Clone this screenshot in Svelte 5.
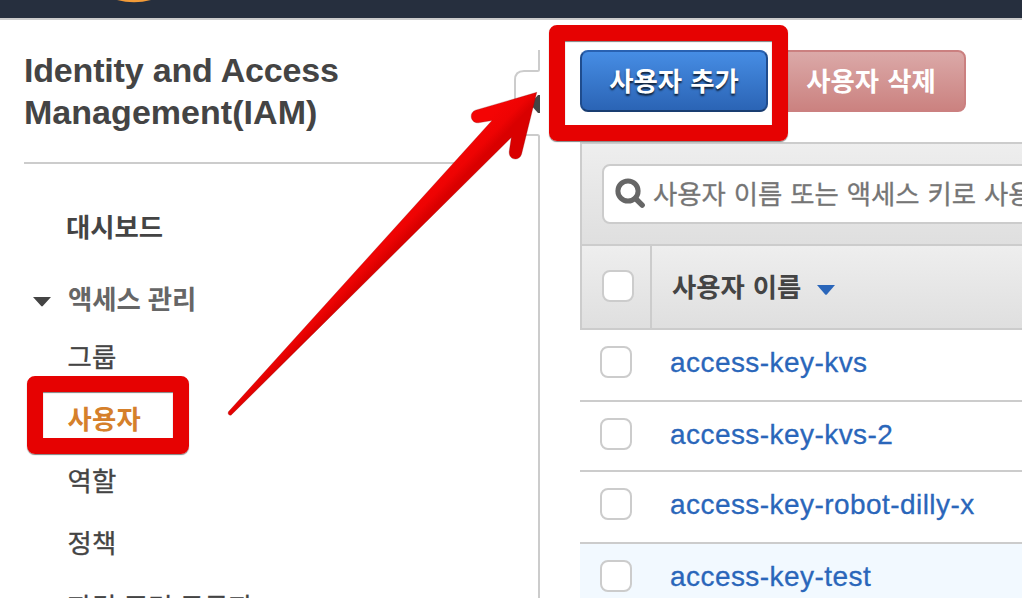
<script>
  const navItems = ['그룹', '사용자', '역할', '정책', '자격 증명 공급자'];
  const current = '사용자';
  const users = [
    { name: 'access-key-kvs', height: 72 },
    { name: 'access-key-kvs-2', height: 70 },
    { name: 'access-key-robot-dilly-x', height: 72 },
    { name: 'access-key-test', height: 72, hover: true }
  ];
</script>

<div class="page">
  <header class="topbar">
    <svg class="smile" width="40" height="4" viewBox="0 0 40 4">
      <path d="M3 0 Q20 4.4 37 0Z" fill="#f29b38" />
    </svg>
  </header>

  <div class="body">
    <aside>
      <h1>Identity and Access<br /><span>Management(IAM)</span></h1>
      <hr />
      <nav>
        <a class="dash" href="#dashboard">대시보드</a>
        <div class="group">
          <svg width="20" height="12" viewBox="0 0 20 12">
            <path d="M1 1H19L10.8 10Q10 10.9 9.2 10Z" fill="#444" />
          </svg>
          <span>액세스 관리</span>
        </div>
        {#each navItems as item}
          <a class="item" class:active={item === current} href="#{item}">{item}</a>
        {/each}
      </nav>
    </aside>

    <div class="divider">
      <svg width="28" height="548" viewBox="0 0 28 548" fill="none">
        <path d="M25 0V19.5Q25 21 23.5 21H10Q1 21 1 30V76Q1 85 10 85H23.5Q25 85 25 86.5V548" stroke="#ccc" stroke-width="2" />
        <path d="M26 45V63H24L16 54L24 45Z" fill="#444" />
      </svg>
    </div>

    <main>
      <div class="actions">
        <button class="add">사용자 추가</button>
        <button class="remove">사용자 삭제</button>
      </div>
      <section class="panel">
        <div class="filter">
          <div class="search">
            <svg width="32" height="32" viewBox="0 0 32 32" fill="none" stroke="#666">
              <circle cx="13" cy="13" r="10.1" stroke-width="5" />
              <path d="M20.5 20.5L27.2 27.2" stroke-width="5.4" stroke-linecap="round" />
            </svg>
            <span>사용자 이름 또는 액세스 키로 사용자 찾기</span>
          </div>
        </div>
        <div class="thead">
          <div class="pick"><i class="check"></i></div>
          <div class="col">
            <span>사용자 이름</span>
            <svg width="20" height="12" viewBox="0 0 20 12">
              <path d="M1 1H19L10.8 10.4Q10 11.3 9.2 10.4Z" fill="#2a66ba" />
            </svg>
          </div>
        </div>
      </section>
      {#each users as user}
        <div class="row" class:hover={user.hover} style:height="{user.height}px">
          <i class="check"></i>
          <a href="#{user.name}">{user.name}</a>
        </div>
      {/each}
    </main>
  </div>

  <div class="mark mark-add"></div>
  <div class="mark mark-nav"></div>
  <svg class="arrow" width="1022" height="598" viewBox="0 0 1022 598">
    <defs>
      <linearGradient id="shaft" gradientUnits="userSpaceOnUse" x1="490" y1="116" x2="514" y2="139">
        <stop offset="0" stop-color="#f40404" />
        <stop offset="0.42" stop-color="#ee0303" />
        <stop offset="0.7" stop-color="#d90000" />
        <stop offset="1" stop-color="#d90000" />
      </linearGradient>
    </defs>
    <path
      d="M536.8 92.3L475.5 110.2C468.5 112.5 470.5 123.5 478.5 122.8L492 120.5L228.4 411.8C227.5 414 229 415.6 231 415.2L511.3 137.5L509.2 151.5C508.5 160.5 519.5 161.5 521.6 154Z"
      fill="url(#shaft)"
      stroke="#801010"
      stroke-opacity="0.45"
      stroke-width="0.6"
    />
  </svg>
</div>

<style>
  :global(body) {
    margin: 0;
  }
  .page {
    position: relative;
    width: 1022px;
    height: 598px;
    overflow: hidden;
    background: #fff;
    color: #444;
    font-family: 'Liberation Sans', 'Noto Sans CJK KR', sans-serif;
    font-size: 26.4px;
  }
  .page * {
    box-sizing: border-box;
  }
  a {
    color: inherit;
    text-decoration: none;
  }
  .topbar {
    height: 20px;
    background: #262f3e;
    border-bottom: 2px solid #ccc;
  }
  .smile {
    display: block;
    margin-left: 114px;
  }
  .body {
    display: flex;
    height: 578px;
  }
  aside {
    width: 514px;
    flex: none;
    padding: 29px 0 0 24px;
  }
  h1 {
    margin: 0;
    font-size: 34px;
    line-height: 42px;
    letter-spacing: -0.18px;
    height: 113px;
  }
  h1 span {
    letter-spacing: 0.04px;
  }
  hr {
    margin: 0;
    width: 450px;
    border: 0;
    border-top: 2px solid #ccc;
  }
  nav {
    display: flex;
    flex-direction: column;
    padding-top: 26px;
    word-spacing: 1px;
  }
  nav,
  button,
  .search,
  .col {
    font-family: 'Noto Sans CJK KR', sans-serif;
  }
  .dash {
    height: 72px;
    line-height: 72px;
    padding-left: 42px;
    font-weight: 700;
  }
  .group {
    display: flex;
    align-items: center;
    height: 72px;
    padding-left: 8px;
    gap: 16px;
    color: #666;
    font-weight: 700;
  }
  .group span {
    margin-top: -2px;
  }
  .group svg {
    margin-top: 8px;
  }
  .item {
    height: 62px;
    line-height: 58px;
    padding-left: 43.6px;
    flex: none;
    letter-spacing: 0.2px;
    -webkit-text-stroke: 0.35px currentColor;
  }
  .group + .item {
    margin-top: -7px;
  }
  .item:last-child {
    line-height: 61px;
  }
  .item.active {
    color: #d5802b;
    font-weight: 700;
    -webkit-text-stroke: 0;
  }
  .divider {
    width: 28px;
    flex: none;
    padding-top: 30px;
  }
  .divider svg {
    display: block;
  }
  main {
    width: 480px;
    flex: none;
    margin-left: 38px;
    padding-top: 30px;
  }
  .actions {
    display: flex;
    gap: 8px;
    height: 92px;
  }
  button {
    height: 62px;
    width: 188px;
    padding: 0 0 4px;
    border-radius: 8px;
    font-size: 26.4px;
    font-weight: 700;
    word-spacing: 2px;
    color: #fff;
  }
  .add {
    border: 2px solid;
    border-color: #2861b1 #1f4c8d #193d71;
    background: linear-gradient(#468de4, #2b64b5);
    text-shadow: 0 2px 2px rgba(0, 0, 0, 0.75);
  }
  .remove {
    width: 190px;
    border: 2px solid #cb8080;
    background: linear-gradient(#dba9a8, #cb8280);
  }
  .panel {
    border: 2px solid #ccc;
    border-right: 0;
  }
  .filter {
    height: 102px;
    padding: 20px 0 0 20px;
    border-bottom: 2px solid #ccc;
    background: linear-gradient(#eee, #dfdfdf);
  }
  .search {
    height: 60px;
    width: 500px;
    display: flex;
    align-items: center;
    padding-left: 11px;
    gap: 6px;
    background: #fff;
    border: 2px solid #ccc;
    border-radius: 8px;
    color: #757575;
    white-space: nowrap;
    word-spacing: 2px;
    -webkit-text-stroke: 0.3px currentColor;
  }
  .search svg {
    flex: none;
  }
  .search span {
    margin-top: -4px;
  }
  .thead {
    display: flex;
    height: 82px;
    background: linear-gradient(#eee, #dfdfdf);
  }
  .pick {
    width: 70px;
    padding: 24px 0 0 20px;
    border-right: 2px solid #ccc;
  }
  .check {
    display: block;
    flex: none;
    width: 32px;
    height: 32px;
    border: 2px solid #ccc;
    border-radius: 8px;
    background: #fff;
  }
  .col {
    display: flex;
    align-items: center;
    gap: 15px;
    padding-left: 20px;
    font-weight: 700;
    word-spacing: 2px;
  }
  .col span {
    margin-top: -4px;
  }
  .col svg {
    margin-top: 5px;
  }
  .row {
    display: flex;
    gap: 38px;
    padding: 16px 0 0 20px;
    border-bottom: 2px solid #ccc;
    font-size: 28px;
    line-height: 34px;
    letter-spacing: 0.44px;
    color: #2a66ba;
    -webkit-text-stroke: 0.3px currentColor;
  }
  .row.hover {
    background: #f2f9ff;
  }
  .mark {
    position: absolute;
    border: 16px solid #e60202;
    border-radius: 8px;
    box-shadow: 0 1px 1px rgba(0, 0, 0, 0.5), inset 0 1px 1px rgba(0, 0, 0, 0.5);
  }
  .mark-add {
    left: 549px;
    top: 25px;
    width: 239px;
    height: 116px;
  }
  .mark-nav {
    left: 27px;
    top: 376px;
    width: 162px;
    height: 78px;
  }
  .arrow {
    position: absolute;
    left: 0;
    top: 0;
  }
</style>
